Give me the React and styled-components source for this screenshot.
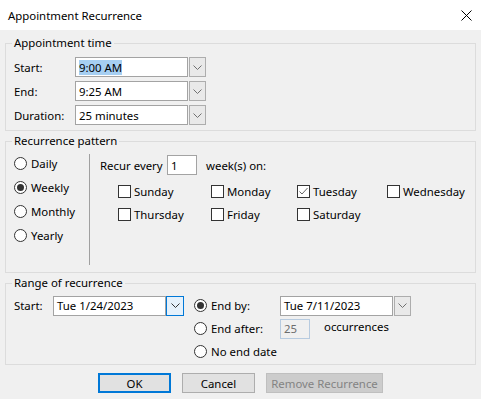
import React from 'react'
import styled, { createGlobalStyle } from 'styled-components'

const GlobalStyle = createGlobalStyle`
  html, body {
    margin: 0;
    padding: 0;
    background: #f0f0f0;
  }
  body {
    font-family: "Segoe UI", "Noto Sans", sans-serif;
    font-size: 11.4px;
    color: #000;
  }
`

const Dialog = styled.div`
  width: 481px;
  height: 399px;
  background: #f0f0f0;
  display: flex;
  flex-direction: column;
  overflow: hidden;
`

const TitleBar = styled.div`
  height: 30px;
  flex: none;
  background: #fff;
  display: flex;
  align-items: center;
  justify-content: space-between;
  padding: 0 9px 0 8px;
  box-sizing: border-box;
`

const Body = styled.div`
  padding: 5px 5px 0 5px;
  display: flex;
  flex-direction: column;
  gap: 2px;
`

const Group = styled.fieldset`
  margin: 0;
  min-width: 0;
  border: 1px solid #dcdcdc;
  padding: ${(p) => p.$pad};
  box-sizing: border-box;
`

const Legend = styled.legend`
  margin-left: 6px;
  padding: 0 2px;
  line-height: 16px;
  height: 16px;
`

const TimeGrid = styled.div`
  padding-left: 8px;
  display: grid;
  grid-template-columns: 61px auto;
  grid-auto-rows: 20px;
  row-gap: 4px;
  align-items: center;
`

const ComboWrap = styled.div`
  display: flex;
  align-items: center;
`

const Field = styled.div`
  width: ${(p) => p.$w}px;
  height: 20px;
  box-sizing: border-box;
  border: 1px solid ${(p) => (p.$disabled ? '#b7cbe0' : '#a3a3a3')};
  background: ${(p) => (p.$disabled ? '#f0f0f0' : '#fff')};
  color: ${(p) => (p.$disabled ? '#6d6d6d' : '#000')};
  display: flex;
  align-items: center;
  padding: 0 3px;
  white-space: nowrap;
`

const Selected = styled.span`
  background: #a6cff2;
  line-height: 15px;
`

const DropButton = styled.div`
  width: ${(p) => (p.$focus ? 18 : 17)}px;
  height: 20px;
  box-sizing: border-box;
  margin-left: ${(p) => (p.$focus ? 0 : 1)}px;
  border: 1px solid ${(p) => (p.$focus ? '#0078d7' : '#adadad')};
  background: ${(p) => (p.$focus ? '#e5f1fb' : '#e9e9e9')};
  display: flex;
  align-items: center;
  justify-content: center;
`

const PatternBody = styled.div`
  display: flex;
  align-items: flex-start;
`

const FreqColumn = styled.div`
  width: 83px;
  padding-left: 8px;
  box-sizing: border-box;
`

const OptionRow = styled.div`
  height: ${(p) => p.$h}px;
  display: flex;
  align-items: center;
  gap: 4px;
  white-space: nowrap;
`

const Radio = styled.span`
  width: 13px;
  height: 13px;
  box-sizing: border-box;
  border: 1px solid #333;
  border-radius: 50%;
  background: #fff;
  flex: none;
  display: flex;
  align-items: center;
  justify-content: center;
  &::after {
    content: '';
    width: 7px;
    height: 7px;
    border-radius: 50%;
    background: ${(p) => (p.$checked ? '#333' : 'transparent')};
  }
`

const WeekPanel = styled.div`
  margin-top: 3px;
  height: 111px;
  box-sizing: border-box;
  border-left: 1px solid #a0a0a0;
  padding: 1px 0 0 10px;
  flex: 1;
`

const RecurRow = styled.div`
  height: 20px;
  display: flex;
  align-items: center;
`

const RecurLabel = styled.span`
  width: 67px;
`

const WeeksText = styled.span`
  margin-left: 9px;
`

const DayGrid = styled.div`
  margin: 5px 0 0 18px;
  display: grid;
  grid-template-columns: 93px 86px 90px auto;
  grid-auto-rows: 23px;
  align-items: center;
`

const DayItem = styled.label`
  display: flex;
  align-items: center;
  gap: 3px;
  white-space: nowrap;
`

const Box = styled.span`
  width: 13px;
  height: 13px;
  box-sizing: border-box;
  border: 1px solid #333;
  background: #fff;
  flex: none;
  display: flex;
  align-items: center;
  justify-content: center;
`

const RangeBody = styled.div`
  padding-left: 8px;
  display: flex;
  align-items: flex-start;
`

const StartBlock = styled.div`
  height: 23px;
  display: flex;
  align-items: center;
`

const StartLabel = styled.span`
  width: 39px;
`

const EndOptions = styled.div`
  margin-left: 10px;
`

const OptionLabel = styled.div`
  width: 82px;
  display: flex;
  align-items: center;
  gap: 4px;
  white-space: nowrap;
`

const Occurrences = styled.span`
  margin-left: 10px;
  align-self: flex-start;
  line-height: 19px;
`

const ButtonRow = styled.div`
  margin-top: 6px;
  display: flex;
  justify-content: center;
  gap: 11px;
`

const Button = styled.button`
  width: ${(p) => p.$w}px;
  height: 20px;
  box-sizing: border-box;
  padding: 0;
  font: inherit;
  color: ${(p) => (p.disabled ? '#838383' : '#000')};
  background: ${(p) => (p.disabled ? '#cccccc' : '#e1e1e1')};
  border: ${(p) => (p.$default ? '2px solid #0078d7' : p.disabled ? '1px solid #bfbfbf' : '1px solid #adadad')};
`

const Chevron = ({ dark }) => (
  <svg width="9" height="5" viewBox="0 0 9 5">
    <polyline points="0.5,0.5 4.5,4.5 8.5,0.5" fill="none" stroke={dark ? '#333' : '#707070'} strokeWidth="1" />
  </svg>
)

const Combo = ({ width, children, focus }) => (
  <ComboWrap>
    <Field $w={width}>{children}</Field>
    <DropButton $focus={focus}>
      <Chevron dark={focus} />
    </DropButton>
  </ComboWrap>
)

const CloseIcon = () => (
  <svg width="11" height="11" viewBox="0 0 11 11">
    <path d="M0.5 0.5 L10.5 10.5 M10.5 0.5 L0.5 10.5" stroke="#000" strokeWidth="1" />
  </svg>
)

const CheckMark = () => (
  <svg width="11" height="11" viewBox="0 0 11 11">
    <polyline points="1.5,5.5 4,8 9.5,2" fill="none" stroke="#666" strokeWidth="1" />
  </svg>
)

const days = [
  ['Sunday', false],
  ['Monday', false],
  ['Tuesday', true],
  ['Wednesday', false],
  ['Thursday', false],
  ['Friday', false],
  ['Saturday', false],
]

const App = () => {
  return (
    <>
      <GlobalStyle />
      <Dialog>
        <TitleBar>
          <span>Appointment Recurrence</span>
          <CloseIcon />
        </TitleBar>

        <Body>
          <Group $pad="6px 0 5px 0">
            <Legend>Appointment time</Legend>
            <TimeGrid>
              <span>Start:</span>
              <Combo width={113}><Selected>9:00 AM</Selected></Combo>
              <span>End:</span>
              <Combo width={113}>9:25 AM</Combo>
              <span>Duration:</span>
              <Combo width={113}>25 minutes</Combo>
            </TimeGrid>
          </Group>

          <Group $pad="2px 0 7px 0">
            <Legend>Recurrence pattern</Legend>
            <PatternBody>
              <FreqColumn>
                {['Daily', 'Weekly', 'Monthly', 'Yearly'].map((f) => (
                  <OptionRow key={f} $h={24}>
                    <Radio $checked={f === 'Weekly'} />
                    {f}
                  </OptionRow>
                ))}
              </FreqColumn>
              <WeekPanel>
                <RecurRow>
                  <RecurLabel>Recur every</RecurLabel>
                  <Field $w={30}>1</Field>
                  <WeeksText>week(s) on:</WeeksText>
                </RecurRow>
                <DayGrid>
                  {days.map(([d, on]) => (
                    <DayItem key={d}>
                      <Box>{on && <CheckMark />}</Box>
                      {d}
                    </DayItem>
                  ))}
                </DayGrid>
              </WeekPanel>
            </PatternBody>
          </Group>

          <Group $pad="3px 0 1px 0">
            <Legend>Range of recurrence</Legend>
            <RangeBody>
              <StartBlock>
                <StartLabel>Start:</StartLabel>
                <Combo width={113} focus>Tue 1/24/2023</Combo>
              </StartBlock>
              <EndOptions>
                <OptionRow $h={23}>
                  <OptionLabel><Radio $checked />End by:</OptionLabel>
                  <Combo width={113}>Tue 7/11/2023</Combo>
                </OptionRow>
                <OptionRow $h={23}>
                  <OptionLabel><Radio />End after:</OptionLabel>
                  <Field $w={30} $disabled>25</Field>
                  <Occurrences>occurrences</Occurrences>
                </OptionRow>
                <OptionRow $h={23}>
                  <OptionLabel><Radio />No end date</OptionLabel>
                </OptionRow>
              </EndOptions>
            </RangeBody>
          </Group>

          <ButtonRow>
            <Button $w={73} $default>OK</Button>
            <Button $w={73}>Cancel</Button>
            <Button $w={117} disabled>Remove Recurrence</Button>
          </ButtonRow>
        </Body>
      </Dialog>
    </>
  )
}

export default App
